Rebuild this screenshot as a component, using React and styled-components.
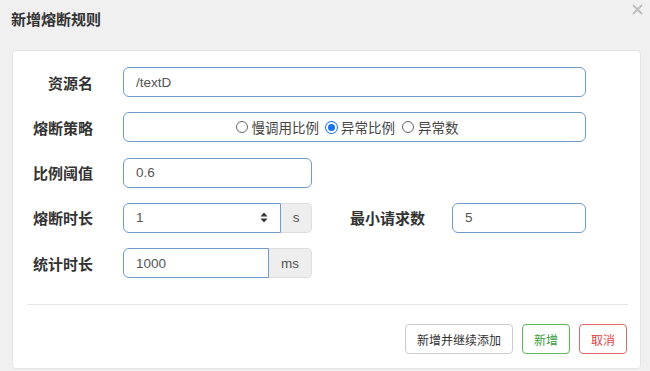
import React from 'react'
import styled, { createGlobalStyle } from 'styled-components'

const GlobalStyle = createGlobalStyle`
    body{
        margin: 0;
        background: #f0f0f0;
        font-family: "Liberation Sans", "Noto Sans CJK SC", sans-serif;
        color: #333;
    }
`

const Dialog = styled.div`
    width: 650px;
    height: 371px;
    display: flex;
    flex-direction: column;
    box-sizing: border-box;
`
const Header = styled.div`
    height: 50px;
    display: flex;
    justify-content: space-between;
    align-items: flex-start;
    padding: 11px 6px 0 11px;
    box-sizing: border-box;
`
const Title = styled.h4`
    margin: 0;
    font-size: 15px;
    line-height: 17px;
    font-weight: bold;
    color: #333;
`
const Close = styled.button`
    border: none;
    background: none;
    padding: 0;
    margin-top: -7px;
    width: 12px;
    height: 12px;
    display: flex;
    svg{
        display: block;
    }
`
const Card = styled.div`
    margin: 0 9px 0 12px;
    height: 319px;
    background: #fff;
    border: 1px solid #e4e4e4;
    border-radius: 4px;
    box-sizing: border-box;
    padding-top: 16px;
`
const Row = styled.div`
    display: flex;
    align-items: center;
    height: 30px;
    margin-bottom: 15.3px;
`
const Label = styled.label`
    width: ${(p) => p.$width || 80}px;
    flex: none;
    text-align: right;
    font-size: 15px;
    font-weight: bold;
    color: #333;
    margin-right: ${(p) => p.$gap || 30}px;
`
const Input = styled.div`
    width: ${(p) => p.$width}px;
    height: 30px;
    box-sizing: border-box;
    border: 1px solid #6f9bc9;
    border-radius: ${(p) => (p.$joined ? '6px 0 0 6px' : '6px')};
    display: flex;
    align-items: center;
    justify-content: ${(p) => (p.$center ? 'center' : 'space-between')};
    padding: 0 12px;
    font-size: 13.5px;
    color: #555;
    background: #fff;
`
const Group = styled.div`
    display: flex;
`
const Addon = styled.span`
    width: ${(p) => p.$width}px;
    height: 30px;
    box-sizing: border-box;
    border: 1px solid #ddd;
    border-left: none;
    border-radius: 0 5px 5px 0;
    background: #eee;
    color: #555;
    font-size: 13.5px;
    display: flex;
    align-items: center;
    justify-content: center;
`
const Radios = styled.div`
    display: flex;
    align-items: center;
    gap: 6px;
    margin-right: 16px;
`
const Radio = styled.span`
    display: flex;
    align-items: center;
    gap: 3px;
    font-size: 13.5px;
    color: #444;
    &::before{
        content: '';
        width: ${(p) => (p.$checked ? 7 : 10)}px;
        height: ${(p) => (p.$checked ? 7 : 10)}px;
        border-radius: 50%;
        border: ${(p) => (p.$checked ? '2px solid #fff' : '1px solid #666')};
        background: ${(p) => (p.$checked ? '#1a73e8' : '#fff')};
        box-shadow: ${(p) => (p.$checked ? '0 0 0 1px #1a73e8' : 'none')};
        margin: 0 1px;
    }
`
const Divider = styled.hr`
    border: none;
    border-top: 1px solid #e6e6e6;
    margin: 26px 12px 19px 14px;
`
const Footer = styled.div`
    display: flex;
    justify-content: flex-end;
    gap: 9px;
    padding-right: 13px;
`
const Button = styled.button`
    height: 30px;
    padding: 0 11px;
    background: #fff;
    border: 1px solid ${(p) => p.$border || '#ccc'};
    border-radius: 4px;
    color: ${(p) => p.$color || '#333'};
    font-size: 12px;
    font-family: inherit;
`

const Spinner = () => (
    <svg width="8" height="11" viewBox="0 0 8 11">
        <path d="M4 0.5 L7.5 4.5 L0.5 4.5 Z" fill="#333" />
        <path d="M4 10.5 L7.5 6.5 L0.5 6.5 Z" fill="#333" />
    </svg>
)

const App = () => {
    return (
        <>
            <GlobalStyle />
            <Dialog>
                <Header>
                    <Title>新增熔断规则</Title>
                    <Close aria-label="close">
                        <svg width="11" height="11" viewBox="0 0 11 11">
                            <path d="M1 1 L10 10 M10 1 L1 10" stroke="#bdbdbd" strokeWidth="1.8" />
                        </svg>
                    </Close>
                </Header>
                <Card>
                    <Row>
                        <Label>资源名</Label>
                        <Input $width={463}>/textD</Input>
                    </Row>
                    <Row>
                        <Label>熔断策略</Label>
                        <Input $width={463} $center>
                            <Radios>
                                <Radio>慢调用比例</Radio>
                                <Radio $checked>异常比例</Radio>
                                <Radio>异常数</Radio>
                            </Radios>
                        </Input>
                    </Row>
                    <Row>
                        <Label>比例阈值</Label>
                        <Input $width={189}>0.6</Input>
                    </Row>
                    <Row>
                        <Label>熔断时长</Label>
                        <Group>
                            <Input $width={158} $joined>
                                1
                                <Spinner />
                            </Input>
                            <Addon $width={31}>s</Addon>
                        </Group>
                        <Label $width={113} $gap={27}>最小请求数</Label>
                        <Input $width={134}>5</Input>
                    </Row>
                    <Row>
                        <Label>统计时长</Label>
                        <Group>
                            <Input $width={146} $joined>1000</Input>
                            <Addon $width={43}>ms</Addon>
                        </Group>
                    </Row>
                    <Divider />
                    <Footer>
                        <Button>新增并继续添加</Button>
                        <Button $border="#5cb85c" $color="#3d9b3d">新增</Button>
                        <Button $border="#e0686a" $color="#d9443f">取消</Button>
                    </Footer>
                </Card>
            </Dialog>
        </>
    )
}

export default App
